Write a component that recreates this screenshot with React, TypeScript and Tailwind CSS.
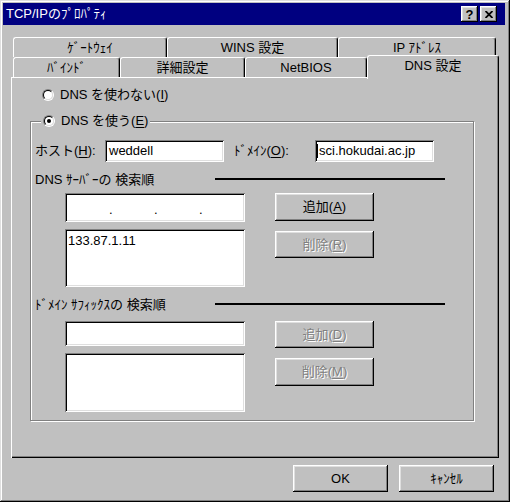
import { ReactNode } from 'react'

const raised = 'shadow-[inset_-1px_-1px_#000,inset_1px_1px_#fff,inset_-2px_-2px_#808080,inset_2px_2px_#dfdfdf]'
const sunken = 'shadow-[inset_1px_1px_#808080,inset_-1px_-1px_#fff,inset_2px_2px_#000,inset_-2px_-2px_#dfdfdf]'

const Key = ({ k }: { k: string }) => <span className="underline underline-offset-[2px]">{k}</span>

type BtnProps = { children: ReactNode; disabled?: boolean; className?: string }
const Btn = ({ children, disabled, className }: BtnProps) => (
  <button
    type="button"
    className={`flex shrink-0 items-center justify-center bg-[#c0c0c0] ${raised} ${
      disabled ? 'text-[#808080] [text-shadow:1px_1px_0_#fff]' : 'text-black'
    } ${className ?? ''}`}
  >
    {children}
  </button>
)

const Radio = ({ checked }: { checked?: boolean }) => (
  <span className="flex h-[12px] w-[12px] shrink-0 items-center justify-center rounded-full border border-t-[#808080] border-l-[#808080] border-r-white border-b-white">
    <span className="flex h-[10px] w-[10px] items-center justify-center rounded-full border border-t-black border-l-black border-r-[#dfdfdf] border-b-[#dfdfdf] bg-white">
      {checked && <span className="h-[4px] w-[4px] rounded-full bg-black" />}
    </span>
  </span>
)

type TabProps = { children: ReactNode; className: string }
const Tab = ({ children, className }: TabProps) => (
  <div
    className={`flex shrink-0 items-center justify-center rounded-t-[3px] border-t border-l border-r border-t-white border-l-white border-r-black bg-[#c0c0c0] shadow-[inset_-1px_0_#808080] ${className}`}
  >
    {children}
  </div>
)

const Field = ({ children, className }: { children?: ReactNode; className: string }) => (
  <div className={`shrink-0 bg-white ${sunken} ${className}`}>{children}</div>
)

const Separator = ({ label }: { label: string }) => (
  <div className="flex h-[16px] w-[414px] items-center justify-between pl-[4px]">
    <span>{label}</span>
    <div className="mb-[2px] h-[2px] w-[230px] bg-black" />
  </div>
)

export default function App() {
  return (
    <div className="flex h-[502px] w-[510px] flex-col bg-[#c0c0c0] pt-[3px] pr-[5px] pl-[3px] font-['Liberation_Sans','Noto_Sans_CJK_JP',sans-serif] text-[13px] leading-[16px] text-black shadow-[inset_-1px_-1px_#000,inset_1px_1px_#dfdfdf,inset_-2px_-2px_#808080,inset_2px_2px_#fff]">
      {/* title bar */}
      <div className="flex h-[22px] shrink-0 items-center justify-between bg-[#000080] pr-[8px] pl-[3px]">
        <span className="text-white">TCP/IPのﾌﾟﾛﾊﾟﾃｨ</span>
        <div className="flex gap-[2px]">
          <button
            type="button"
            className={`flex h-[16px] w-[17px] items-center justify-center bg-[#c0c0c0] text-[13px] leading-none font-bold ${raised}`}
          >
            ?
          </button>
          <button type="button" className={`flex h-[16px] w-[17px] items-center justify-center bg-[#c0c0c0] ${raised}`}>
            <svg width="8" height="7" viewBox="0 0 8 7">
              <path d="M0.5 0 L7.5 7 M7.5 0 L0.5 7" stroke="#000" strokeWidth="1.8" />
            </svg>
          </button>
        </div>
      </div>

      {/* tabs, back row */}
      <div className="mt-[12px] ml-[10px] flex h-[20px]">
        <Tab className="h-[20px] w-[154px]">ｹﾞｰﾄｳｪｲ</Tab>
        <Tab className="h-[20px] w-[171px]">WINS 設定</Tab>
        <Tab className="h-[20px] w-[158px]">IP ｱﾄﾞﾚｽ</Tab>
      </div>
      {/* tabs, front row */}
      <div className="ml-[10px] flex h-[20px] items-end">
        <Tab className="h-[20px] w-[107px]">ﾊﾞｲﾝﾄﾞ</Tab>
        <Tab className="h-[20px] w-[125px]">詳細設定</Tab>
        <Tab className="h-[20px] w-[122px]">NetBIOS</Tab>
        <Tab className="relative z-10 -mb-[2px] h-[24px] w-[132px] pb-[3px]">DNS 設定</Tab>
      </div>

      {/* panel */}
      <div className="ml-[8px] flex h-[381px] w-[488px] shrink-0 flex-col pt-[10px] shadow-[inset_1px_1px_#fff,inset_-1px_-1px_#000,inset_-2px_-2px_#808080]">
        <div className="ml-[31px] flex h-[16px] items-center gap-[6px]">
          <Radio />
          <span>
            DNS を使わない(<Key k="I" />)
          </span>
        </div>

        <div className="relative mt-[18px] ml-[19px] flex h-[300px] w-[444px] flex-col border border-[#808080] shadow-[inset_1px_1px_#fff,1px_1px_#fff]">
          <div className="absolute top-[-9px] left-[10px] flex h-[16px] items-center gap-[6px] bg-[#c0c0c0] px-[2px]">
            <Radio checked />
            <span>
              DNS を使う(<Key k="E" />)
            </span>
          </div>

          <div className="mt-[18px] flex h-[22px] items-center pl-[4px]">
            <span className="w-[70px]">
              ホスト(<Key k="H" />):
            </span>
            <Field className="flex h-[22px] w-[119px] items-center pl-[4px]">weddell</Field>
            <span className="ml-[10px] w-[81px]">
              ﾄﾞﾒｲﾝ(<Key k="O" />):
            </span>
            <Field className="flex h-[22px] w-[119px] items-center pl-[2px]">
              <span className="mr-[1px] h-[14px] w-[1px] bg-black" />
              sci.hokudai.ac.jp
            </Field>
          </div>

          <div className="mt-[10px]">
            <Separator label="DNS ｻｰﾊﾞｰの 検索順" />
          </div>

          <div className="mt-[5px] flex items-start pl-[34px]">
            <Field className="flex h-[29px] w-[180px] items-end pb-[4px] pl-[2px]">
              <span className="w-[42px]" />
              <span className="w-[3px]">.</span>
              <span className="w-[42px]" />
              <span className="w-[3px]">.</span>
              <span className="w-[42px]" />
              <span className="w-[3px]">.</span>
            </Field>
            <Btn className="ml-[30px] h-[28px] w-[99px]">
              追加(<Key k="A" />)
            </Btn>
          </div>

          <div className="mt-[7px] flex items-start pl-[34px]">
            <Field className="h-[58px] w-[180px] pt-[4px] pl-[3px]">133.87.1.11</Field>
            <Btn disabled className="mt-[2px] ml-[30px] h-[27px] w-[99px]">
              削除(<Key k="R" />)
            </Btn>
          </div>

          <div className="mt-[10px]">
            <Separator label="ﾄﾞﾒｲﾝ ｻﾌｨｯｸｽの 検索順" />
          </div>

          <div className="mt-[8px] flex items-start pl-[34px]">
            <Field className="h-[25px] w-[180px]" />
            <Btn disabled className="ml-[30px] h-[27px] w-[99px]">
              追加(<Key k="D" />)
            </Btn>
          </div>

          <div className="mt-[5px] flex items-start pl-[34px]">
            <Field className="h-[59px] w-[180px]" />
            <Btn disabled className="mt-[5px] ml-[30px] h-[28px] w-[99px]">
              削除(<Key k="M" />)
            </Btn>
          </div>
        </div>
      </div>

      {/* dialog buttons */}
      <div className="mt-[7px] flex justify-end gap-[11px] pr-[11px]">
        <Btn className="h-[27px] w-[95px]">OK</Btn>
        <Btn className="h-[27px] w-[95px]">ｷｬﾝｾﾙ</Btn>
      </div>
    </div>
  )
}
